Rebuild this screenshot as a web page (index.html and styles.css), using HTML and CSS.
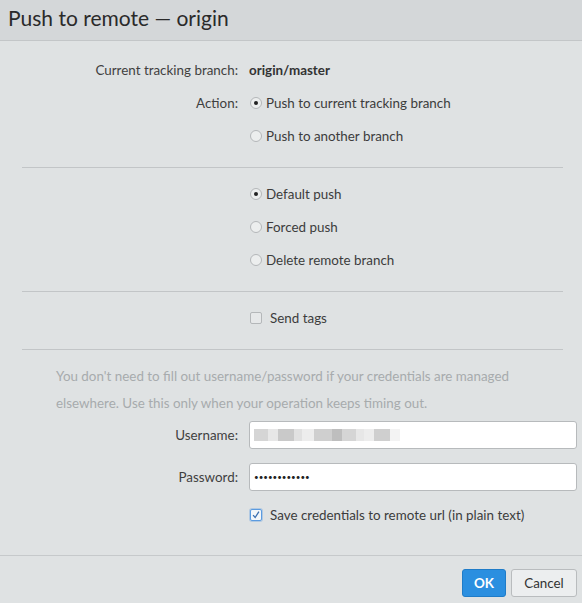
FILE: index.html
```html
<!DOCTYPE html>
<html>
<head>
<meta charset="utf-8">
<link rel="stylesheet" href="styles.css">
</head>
<body>
<div class="dialog">
  <div class="titlebar">Push to remote — origin</div>
  <div class="content">
    <div class="section s1">
      <div class="row"><div class="label">Current tracking branch:</div><div class="value strong">origin/master</div></div>
      <div class="row"><div class="label">Action:</div><div class="value"><span class="radio on"></span>Push to current tracking branch</div></div>
      <div class="row"><div class="label"></div><div class="value"><span class="radio"></span>Push to another branch</div></div>
    </div>
    <div class="sep"></div>
    <div class="section">
      <div class="row"><div class="label"></div><div class="value"><span class="radio on"></span>Default push</div></div>
      <div class="row"><div class="label"></div><div class="value"><span class="radio"></span>Forced push</div></div>
      <div class="row"><div class="label"></div><div class="value"><span class="radio"></span>Delete remote branch</div></div>
    </div>
    <div class="sep"></div>
    <div class="section">
      <div class="row"><div class="label"></div><div class="value"><span class="check"></span>Send tags</div></div>
    </div>
    <div class="sep"></div>
    <div class="section creds">
      <p class="hint">You don't need to fill out username/password if your credentials are managed<br>elsewhere. Use this only when your operation keeps timing out.</p>
      <div class="frow"><div class="label">Username:</div><div class="input"><span class="blur"><i style="width:14px;opacity:.35"></i><i style="width:10px;opacity:.2"></i><i style="width:16px;opacity:.45"></i><i style="width:8px;opacity:.25"></i><i style="width:12px;opacity:.15"></i><i style="width:18px;opacity:.4"></i><i style="width:10px;opacity:.55"></i><i style="width:14px;opacity:.35"></i><i style="width:8px;opacity:.2"></i><i style="width:10px;opacity:.15"></i><i style="width:16px;opacity:.4"></i><i style="width:10px;opacity:.1"></i></span></div></div>
      <div class="frow"><div class="label">Password:</div><div class="input pw">••••••••••••</div></div>
      <div class="row crow"><div class="label"></div><div class="value"><span class="check on"><svg viewBox="0 0 12 12" width="12" height="12"><path d="M2.5 6.2 L5 9 L9.5 2" fill="none" stroke="#3a6fb0" stroke-width="1.6"/></svg></span>Save credentials to remote url (in plain text)</div></div>
    </div>
  </div>
  <div class="footer">
    <button class="btn ok">OK</button>
    <button class="btn">Cancel</button>
  </div>
</div>
</body>
</html>
```
FILE: styles.css
```css
html, body { margin: 0; padding: 0; }
body { background: #dfe2e3; font-family: "Lato", "Noto Sans", sans-serif; font-size: 13.4px; color: #3c3c3c; }
.dialog { width: 582px; height: 603px; display: flex; flex-direction: column; }
.titlebar { background: #d4d7d9; border-bottom: 1px solid #c3c6c8; font-size: 21px; color: #2a2a2a; padding-left: 8px; display: flex; align-items: center; box-sizing: border-box; height: 41px; padding-bottom: 6px; }
.content { flex: 1; }
.section { padding: 9px 0 15px; }
.section.s1 { padding-top: 12px; }
.row { display: grid; grid-template-columns: 238px 1fr; column-gap: 11px; height: 33px; align-items: center; }
.label { text-align: right; color: #3f3f3f; }
.value { display: flex; align-items: center; color: #3c3c3c; }
.value.strong { font-weight: bold; color: #333; }
.sep { height: 1px; background: #c2c5c7; margin: 0 19px 0 22px; }
.radio { width: 12px; height: 12px; border: 1px solid #b4b7b9; border-radius: 50%; background: #eceeee; box-sizing: border-box; margin-left: 1px; margin-right: 4px; position: relative; }
.radio.on::after { content: ""; position: absolute; left: 3px; top: 3px; width: 4px; height: 4px; border-radius: 50%; background: #222; }
.check { width: 12px; height: 12px; border: 1px solid #b4b7b9; border-radius: 2px; background: #e6e8e9; box-sizing: border-box; margin-left: 1px; margin-right: 8px; display: flex; align-items: center; justify-content: center; }
.check.on { border-color: #5b9be0; background: #f3f6f9; box-shadow: 0 0 0 1px rgba(91,155,224,0.35); }
.creds { padding-top: 13px; padding-bottom: 0; }
.hint { margin: 0 0 4px 56px; color: #a7abad; line-height: 27px; }
.frow { display: grid; grid-template-columns: 238px 1fr; column-gap: 11px; align-items: center; margin-bottom: 14px; padding-right: 5px; }
.input { height: 28px; background: #fff; border: 1px solid #b7babc; border-radius: 3px; box-sizing: border-box; display: flex; align-items: center; padding-left: 4px; }
.pw { font-size: 8px; letter-spacing: 0; color: #222; }
.blur { display: flex; height: 12px; }
.blur i { display: block; height: 12px; background: #888; }
.crow { margin-top: -7px; }
.footer { height: 48px; border-top: 1px solid #c6c9cb; display: flex; justify-content: flex-end; align-items: flex-start; padding: 13px 5px 0 0; box-sizing: border-box; gap: 5px; }
.btn { height: 28px; border-radius: 3px; font-family: inherit; font-size: 13.4px; padding: 0; }
.ok { width: 44px; background: #2b8fe0; border: 1px solid #1f7cc8; color: #fff; font-weight: bold; }
.btn:not(.ok) { width: 66px; background: #eceeef; border: 1px solid #b9bcbe; color: #333; }
```
